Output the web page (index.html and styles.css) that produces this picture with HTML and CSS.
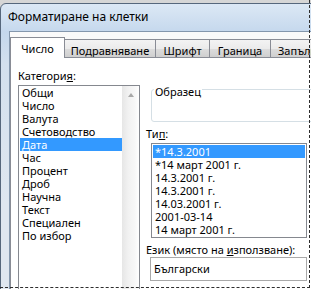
FILE: index.html
```html
<!DOCTYPE html>
<html lang="bg">
<head>
<meta charset="utf-8">
<link rel="stylesheet" href="styles.css">
</head>
<body>
<div class="screen">
  <div class="window">
    <div class="titlebar"><span class="title">Форматиране на клетки</span></div>
    <div class="client">
      <div class="tabs">
        <div class="tab active" style="width:55px">Число</div>
        <div class="tab" style="width:92px">Подравняване</div>
        <div class="tab" style="width:55px">Шрифт</div>
        <div class="tab" style="width:62px">Граница</div>
        <div class="tab last" style="width:80px">Запълване</div>
      </div>
      <div class="panel">
        <div class="col-left">
          <div class="label">Категори<u>я</u>:</div>
          <div class="listbox cat">
            <ul class="items">
              <li>Общи</li>
              <li>Число</li>
              <li>Валута</li>
              <li>Счетоводство</li>
              <li class="sel">Дата</li>
              <li>Час</li>
              <li>Процент</li>
              <li>Дроб</li>
              <li>Научна</li>
              <li>Текст</li>
              <li>Специален</li>
              <li>По избор</li>
            </ul>
            <div class="scrollbar">
              <div class="sb-btn"><span class="arrow-up"></span></div>
            </div>
          </div>
        </div>
        <div class="col-right">
          <fieldset class="sample"><legend>Образец</legend></fieldset>
          <div class="label gap">Ти<u>п</u>:</div>
          <div class="listbox types">
            <ul class="items">
              <li class="sel">*14.3.2001</li>
              <li>*14 март 2001 г.</li>
              <li>14.3.2001 г.</li>
              <li>14.3.2001 г.</li>
              <li>14.03.2001 г.</li>
              <li>2001-03-14</li>
              <li>14 март 2001 г.</li>
            </ul>
          </div>
          <div class="label gap">Език (място на <u>и</u>зползване):</div>
          <div class="combo">Български</div>
        </div>
      </div>
    </div>
  </div>
  <div class="marquee"></div>
</div>
</body>
</html>
```
FILE: styles.css
```css
* { box-sizing: border-box; }
body {
  margin: 0;
  background: #ffffff;
  font-family: "Noto Sans", "DejaVu Sans", sans-serif;
  font-size: 11px;
  color: #000;
}
.screen {
  position: relative;
  width: 311px;
  height: 289px;
  overflow: hidden;
  background: #d6d6d6;
  padding-top: 3px;
}
.window {
  width: 440px;
  height: 330px;
  border: 1px solid #56677c;
  border-radius: 6px 0 0 0;
  background: linear-gradient(#dce8f5, #c5d8ed 28px, #d3e0ee 60px, #dfe7f0 200px);
  padding-left: 8px;
}
.titlebar {
  height: 27px;
  display: flex;
  align-items: center;
  padding-bottom: 2px;
}
.title {
  font-size: 12px;
  line-height: 14px;
  margin-left: -1px;
  color: #000;
}
.client {
  background: #fafafa;
  border-top: 1px solid #8497ad;
  border-left: 1px solid #8497ad;
  height: 300px;
}
.tabs {
  display: flex;
  align-items: flex-end;
  height: 25px;
}
.tab {
  height: 18px;
  margin-left: -1px;
  border: 1px solid #898c95;
  border-bottom: none;
  background: linear-gradient(#f3f3f3, #ebebeb 50%, #dddddd 50%, #cfcfcf);
  text-align: center;
  line-height: 13px;
  padding-top: 4px;
  white-space: nowrap;
  overflow: hidden;
}
.tab.last {
  text-align: left;
  padding-left: 7px;
}
.tab.active {
  margin-left: 0;
  height: 21px;
  margin-bottom: -1px;
  background: #ffffff;
  position: relative;
  z-index: 1;
}
.panel {
  display: flex;
  gap: 6px;
  background: #ffffff;
  border-top: 1px solid #898c95;
  border-left: 1px solid #898c95;
  height: 260px;
  padding: 11px 0 0 7px;
}
.label {
  line-height: 13px;
  height: 13px;
  white-space: nowrap;
}
.label u { text-decoration-thickness: 1px; text-underline-offset: 1px; }
.listbox {
  border: 1px solid #85888f;
  background: #fff;
  padding: 0 1px;
}
.items {
  list-style: none;
  margin: 0;
  padding: 0;
}
.items li {
  height: 13px;
  line-height: 13px;
  padding-left: 2px;
  white-space: nowrap;
}
.items li.sel {
  background: #3399ff;
  color: #fff;
}
.cat {
  display: flex;
  width: 122px;
  height: 220px;
  margin-top: 3px;
  padding-right: 0;
}
.cat .items { width: 102px; }
.scrollbar {
  width: 17px;
  background: linear-gradient(90deg, #e6e6e6, #f2f2f2 40%, #f7f7f7 75%, #ffffff);
}
.sb-btn {
  height: 17px;
  display: flex;
  align-items: center;
  justify-content: center;
}
.arrow-up {
  width: 0;
  height: 0;
  border-left: 3px solid transparent;
  border-right: 3px solid transparent;
  border-bottom: 4px solid #a8a8a8;
  margin-left: 1px;
}
.col-right {
  padding-top: 12px;
  display: flex;
  flex-direction: column;
}
.sample {
  margin: 0 0 0 5px;
  width: 200px;
  height: 41px;
  padding: 0;
  border: 1px solid #d5dfe5;
  border-radius: 3px;
  min-width: 0;
}
.sample legend {
  padding: 4px 1px 0 1px;
  margin-left: 2px;
  line-height: 13px;
}
.gap { margin-top: 5px; }
.types {
  margin: 3px 0 0 5px;
  width: 156px;
  height: 95px;
  padding-top: 1px;
}
.combo {
  margin: 1px 0 0 4px;
  width: 157px;
  height: 24px;
  border: 1px solid #a9a9a9;
  background: #fff;
  padding-left: 3px;
  line-height: 21px;
}
.marquee {
  position: absolute;
  left: 0;
  top: 0;
  width: 310px;
  height: 288px;
  border-right: 1px dashed #2e2e2e;
  border-bottom: 1px dashed #2e2e2e;
  pointer-events: none;
}
```
